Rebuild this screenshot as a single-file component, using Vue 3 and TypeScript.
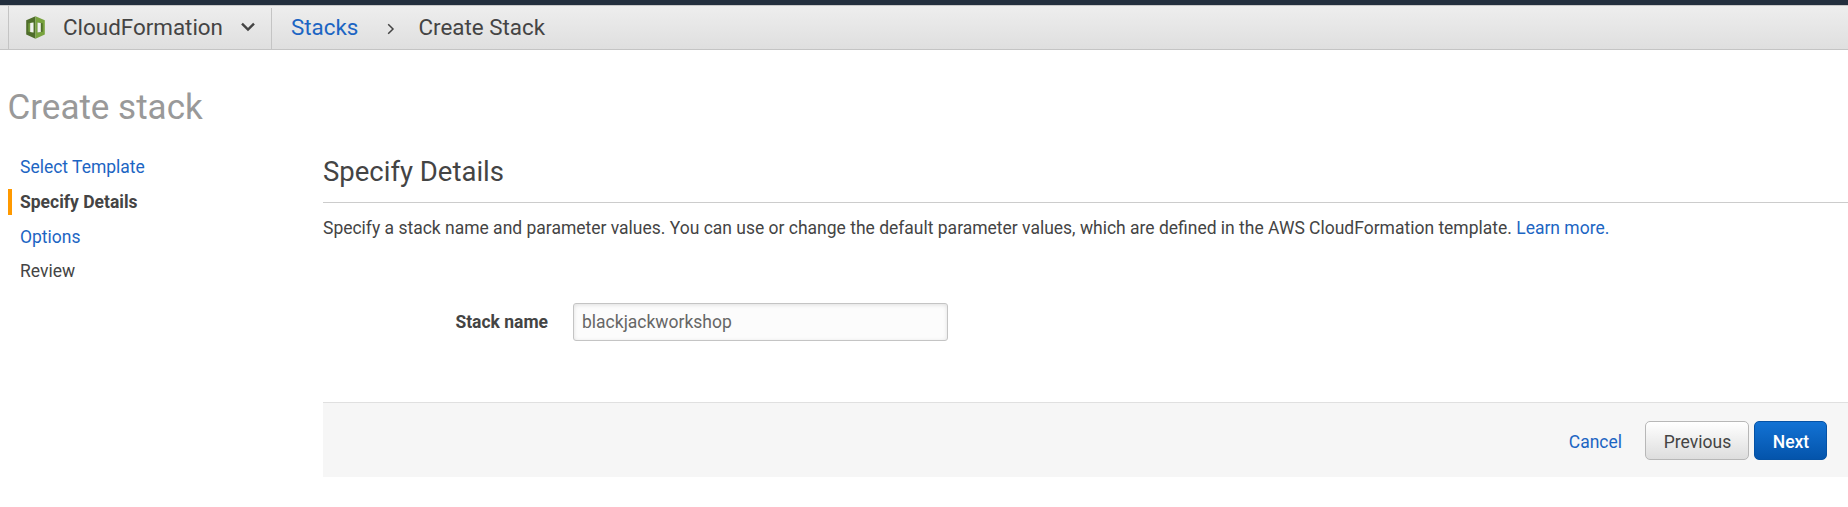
<script setup lang="ts">
import { ref } from 'vue'

interface Step {
  label: string
  state: 'link' | 'current' | 'pending'
}

const steps: Step[] = [
  { label: 'Select Template', state: 'link' },
  { label: 'Specify Details', state: 'current' },
  { label: 'Options', state: 'link' },
  { label: 'Review', state: 'pending' },
]

const stackName = ref('blackjackworkshop')
</script>

<template>
  <div class="page">
    <header class="navbar">
      <div class="service">
        <svg class="logo" width="19" height="23" viewBox="0.5 0 19 23.8" preserveAspectRatio="none">
          <path d="M10 0.2 L0.7 4.5 V19.2 L10 23.6 Z" fill="#4f6d2b" />
          <path d="M10 0.2 L19.3 4.5 V19.2 L10 23.6 Z" fill="#78a33e" />
          <path d="M2.8 7.5 L8 6.7 V17.1 L2.8 16.3 Z" fill="#6f983a" />
          <path d="M4.7 7.3 L8 6.7 V17.1 L4.7 16.5 Z" fill="#f2f2f2" />
          <path d="M12 6.7 L17.2 7.5 V16.3 L12 17.1 Z" fill="#4f6d2b" />
          <path d="M12 6.7 L15.3 7.3 V16.5 L12 17.1 Z" fill="#f2f2f2" />
        </svg>
        <span class="service-name">CloudFormation</span>
        <svg class="caret" width="14" height="10" viewBox="0 0 14 10">
          <path d="M1 1.6 L7 7.6 L13 1.6" fill="none" stroke="#444" stroke-width="2.4" />
        </svg>
      </div>
      <nav class="crumbs">
        <a class="link">Stacks</a>
        <svg class="sep" width="8" height="12" viewBox="0 0 8 12">
          <path d="M1.2 1.2 L6 6 L1.2 10.8" fill="none" stroke="#444" stroke-width="1.5" />
        </svg>
        <span>Create Stack</span>
      </nav>
    </header>

    <h1>Create stack</h1>

    <div class="layout">
      <ul class="steps">
        <li v-for="step in steps" :key="step.label" :class="step.state">{{ step.label }}</li>
      </ul>

      <main>
        <h2>Specify Details</h2>
        <p class="intro">
          Specify a stack name and parameter values. You can use or change the default parameter values, which are defined in the AWS CloudFormation template. <a class="link">Learn more.</a>
        </p>
        <div class="field">
          <label for="stack-name">Stack name</label>
          <input id="stack-name" v-model="stackName" type="text" spellcheck="false" />
        </div>
        <footer>
          <a class="link cancel">Cancel</a>
          <button class="previous" type="button">Previous</button>
          <button class="next" type="button">Next</button>
        </footer>
      </main>
    </div>
  </div>
</template>

<style>
body {
  margin: 0;
  background: #fff;
}
</style>

<style scoped>
.page {
  height: 507px;
  overflow: hidden;
  background: #fff;
  color: #444;
  font: 17.49px/20px Roboto, sans-serif;
}
.link {
  color: #1c65c3;
}
.navbar {
  box-sizing: border-box;
  height: 50px;
  display: flex;
  border-top: 5px solid #232f3e;
  border-bottom: 1px solid #c4c4c4;
  box-shadow: inset 0 1px #c8c8c8;
  background: linear-gradient(#eee, #dfdfdf);
  font-size: 22.4px;
  line-height: 26px;
}
.service {
  box-sizing: border-box;
  width: 263px;
  margin: 1px 0 0 8px;
  padding-left: 17px;
  display: flex;
  align-items: center;
  border-left: 1px solid #c4c4c4;
}
.logo {
  margin-bottom: 1px;
}
.service-name {
  margin: 0 0 2px 18px;
}
.caret {
  margin: 0 0 2px 18px;
}
.crumbs {
  flex: 1;
  margin-top: 3px;
  padding: 0 0 4px 19px;
  display: flex;
  align-items: center;
  border-left: 1px solid #c4c4c4;
}
.sep {
  margin: 4px 23px 0 29px;
}
h1 {
  margin: 38px 0 0 7.5px;
  font-size: 35px;
  line-height: 40px;
  font-weight: 400;
  color: #999;
}
.layout {
  display: grid;
  grid-template-columns: 323px 1fr;
}
.steps {
  list-style: none;
  margin: 26px 0 0;
  padding: 0;
}
.steps li {
  height: 26px;
  margin: 0 0 8px 8px;
  padding-left: 12px;
  line-height: 26px;
}
.steps li.current {
  margin-top: 9px;
  padding-left: 8px;
  border-left: 4px solid #f90;
  font-weight: 700;
}
.steps li.current + li {
  margin-top: 9px;
}
h2 {
  box-sizing: border-box;
  height: 75px;
  margin: 0;
  padding-top: 28px;
  border-bottom: 1px solid #ccc;
  font-size: 27.5px;
  line-height: 32px;
  font-weight: 400;
}
.intro {
  margin: 14px 0 0;
  line-height: 22px;
  white-space: nowrap;
}
.field {
  display: flex;
  align-items: center;
  margin-top: 64px;
}
label {
  width: 225px;
  margin-right: 25px;
  text-align: right;
  font-weight: 700;
}
input {
  box-sizing: border-box;
  width: 375px;
  height: 38px;
  padding: 0 7px 1px 8px;
  border: 1px solid #c4c4c4;
  border-radius: 3px;
  outline: none;
  background: #fcfcfc;
  box-shadow: inset 0 1px 4px rgba(0, 0, 0, 0.12);
  color: #666;
  font: 17.5px Roboto, sans-serif;
}
footer {
  box-sizing: border-box;
  height: 75px;
  margin-top: 61px;
  padding: 18px 21px 0 0;
  display: flex;
  justify-content: flex-end;
  border-top: 1px solid #e0e0e0;
  background: #f6f6f6;
}
.cancel {
  margin-right: 23px;
  line-height: 42px;
}
button {
  box-sizing: border-box;
  height: 39px;
  padding: 2px 0 0 1px;
  border-radius: 5px;
  font: 17.5px Roboto, sans-serif;
}
.previous {
  width: 104px;
  margin-right: 5px;
  border: 1px solid #b7b7b7;
  background: linear-gradient(#fff, #ddd);
  color: #444;
}
.next {
  width: 73px;
  border: 1px solid #0552a5;
  background: linear-gradient(#1272d4, #0454ab);
  color: #fff;
  font-weight: 500;
}
</style>
